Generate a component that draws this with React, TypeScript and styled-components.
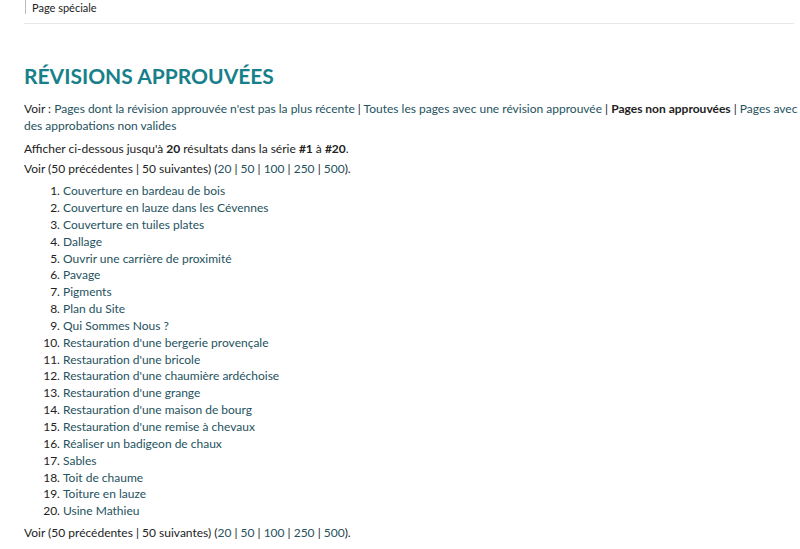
import React from "react";
import styled, { createGlobalStyle } from "styled-components";

const Global = createGlobalStyle`
  html, body { margin: 0; padding: 0; background: #fff; }
  body { font-family: Lato, "Noto Sans", sans-serif; color: #222; font-size: 12px; }
`;

const Page = styled.div`
  padding: 0 2px 0 24px;
`;

const Crumbs = styled.div`
  display: flex;
  align-items: flex-start;
  height: 23px;
  margin-right: 4px;
  border-bottom: 1px solid #e6e6e6;
`;

const Crumb = styled.span`
  display: inline-block;
  margin-left: 1px;
  padding: 2px 0 0 6px;
  border-left: 1px solid #bbb;
  font-size: 11px;
  line-height: 12px;
  color: #222;
`;

const Title = styled.h1`
  margin: 38px 0 0;
  font-size: 21px;
  line-height: 27px;
  font-weight: 700;
  color: #17808a;
  text-transform: uppercase;
`;

const Para = styled.p<{ $mt?: number }>`
  margin: ${(p) => p.$mt ?? 6}px 0 0;
  line-height: 16.8px;
  font-size: 12px;
`;

const Link = styled.a`
  color: #25525e;
  text-decoration: none;
`;

const List = styled.ol`
  margin: 5px 0 0;
  padding-left: 39px;
  line-height: 16.85px;
`;

const Item = styled.li``;

const items = [
  "Couverture en bardeau de bois",
  "Couverture en lauze dans les Cévennes",
  "Couverture en tuiles plates",
  "Dallage",
  "Ouvrir une carrière de proximité",
  "Pavage",
  "Pigments",
  "Plan du Site",
  "Qui Sommes Nous ?",
  "Restauration d'une bergerie provençale",
  "Restauration d'une bricole",
  "Restauration d'une chaumière ardéchoise",
  "Restauration d'une grange",
  "Restauration d'une maison de bourg",
  "Restauration d'une remise à chevaux",
  "Réaliser un badigeon de chaux",
  "Sables",
  "Toit de chaume",
  "Toiture en lauze",
  "Usine Mathieu",
];

const Nav = ({ mt }: { mt?: number }) => (
  <Para $mt={mt}>
    Voir (50 précédentes | 50 suivantes) (<Link>20</Link> | <Link>50</Link> |{" "}
    <Link>100</Link> | <Link>250</Link> | <Link>500</Link>).
  </Para>
);

export default function App() {
  return (
    <Page>
      <Global />
      <Crumbs>
        <Crumb>Page spéciale</Crumb>
      </Crumbs>
      <Title>Révisions approuvées</Title>
      <Para $mt={12}>
        Voir : <Link>Pages dont la révision approuvée n'est pas la plus récente</Link> |{" "}
        <Link>Toutes les pages avec une révision approuvée</Link> | <b>Pages non approuvées</b> |{" "}
        <Link>Pages avec des approbations non valides</Link>
      </Para>
      <Para>
        Afficher ci-dessous jusqu'à <b>20</b> résultats dans la série <b>#1</b> à <b>#20</b>.
      </Para>
      <Nav mt={4} />
      <List>
        {items.map((t) => (
          <Item key={t}>
            <Link>{t}</Link>
          </Item>
        ))}
      </List>
      <Nav mt={5} />
    </Page>
  );
}
